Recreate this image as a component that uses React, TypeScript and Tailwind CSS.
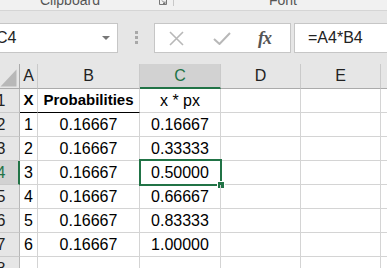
import React from "react";

const colW = ["w-[18px]", "w-[102px]", "w-[81px]", "w-[80px]", "w-[80px]", "w-[80px]"];
const letters = ["A", "B", "C", "D", "E", "F"];

const data: [string, string, string][] = [
  ["1", "0.16667", "0.16667"],
  ["2", "0.16667", "0.33333"],
  ["3", "0.16667", "0.50000"],
  ["4", "0.16667", "0.66667"],
  ["5", "0.16667", "0.83333"],
  ["6", "0.16667", "1.00000"],
];

function RowHeader({ n, active }: { n: number; active?: boolean }) {
  return (
    <div
      className={
        "w-[20px] shrink-0 h-full overflow-hidden flex items-center border-b border-[#cacaca] " +
        (active
          ? "bg-[#d2d2d2] border-r-2 border-r-[#217346] text-[#217346]"
          : "bg-[#e6e6e6] border-r border-r-[#b8b8b8] text-[#222]")
      }
    >
      <div className="w-[38px] -ml-[18px] shrink-0 text-center text-[16px]">{n}</div>
    </div>
  );
}

export default function App() {
  return (
    <div className="w-[387px] h-[268px] overflow-hidden bg-white font-['Liberation_Sans',sans-serif] text-black">
      {/* ribbon strip */}
      <div className="h-[11px] bg-[#f1f1f1] border-b border-[#d5d5d5] flex overflow-hidden">
        <div className="w-[173px] shrink-0 relative">
          <div className="pl-[40px] -mt-[7px] text-[14px] leading-[15px] text-[#555]">Clipboard</div>
          <svg className="absolute left-[159px] top-0" width="8" height="5" viewBox="0 0 8 5">
            <path d="M0.5 0 V4.5 H7.5 V0" fill="none" stroke="#777" strokeWidth="1" />
            <path d="M3 0.5 L6 3.5 M6 1.5 V3.5 H4" fill="none" stroke="#777" strokeWidth="1" />
          </svg>
        </div>
        <div className="w-px h-[6px] bg-[#c8c8c8] shrink-0" />
        <div className="flex-1 pl-[95px] -mt-[7px] text-[14px] leading-[15px] text-[#555]">Font</div>
      </div>

      {/* formula bar */}
      <div className="h-[53px] bg-[#e6e6e6] flex items-start pt-[12px]">
        <div className="-ml-[13px] w-[131px] h-[30px] shrink-0 bg-white border border-[#c6c6c6] flex items-center pl-[8px] pr-[7px]">
          <span className="text-[16px] text-[#222]">C4</span>
          <svg className="ml-auto" width="8" height="4" viewBox="0 0 8 4">
            <path d="M0 0 H8 L4 4 Z" fill="#777" />
          </svg>
        </div>
        <div className="ml-[17px] mt-[8px] flex flex-col gap-[2px] shrink-0">
          <div className="w-[3px] h-[3px] bg-[#a8a8a8]" />
          <div className="w-[3px] h-[3px] bg-[#a8a8a8]" />
          <div className="w-[3px] h-[3px] bg-[#a8a8a8]" />
        </div>
        <div className="ml-[16px] w-[137px] h-[30px] shrink-0 bg-white border border-[#c6c6c6] flex items-center pl-[14px]">
          <svg width="15" height="15" viewBox="0 0 15 15">
            <path d="M1 1 L14 14 M14 1 L1 14" stroke="#b8b8b8" strokeWidth="1.6" fill="none" />
          </svg>
          <svg className="ml-[29px]" width="18" height="13" viewBox="0 0 18 13">
            <path d="M1 7 L6.5 12 L17 1" stroke="#b8b8b8" strokeWidth="2" fill="none" />
          </svg>
          <span className="ml-[27px] font-['Liberation_Serif',serif] italic font-bold text-[18px] text-[#555] tracking-[-1px]">
            fx
          </span>
        </div>
        <div className="ml-[3px] flex-1 -mr-[20px] h-[30px] bg-white border border-[#c6c6c6] flex items-center pl-[13px]">
          <span className="text-[16px] text-[#222]">=A4*B4</span>
        </div>
      </div>

      {/* column headers */}
      <div className="h-[25px] flex">
        <div className="w-[20px] shrink-0 h-full bg-[#e6e6e6] border-r border-b border-[#ababab] relative">
          <svg className="absolute left-0 top-0" width="19" height="24" viewBox="0 0 19 24">
            <path d="M0.5 22.5 L16.5 5.5 L16.5 22.5 Z" fill="#b8b8b8" />
          </svg>
        </div>
        {letters.map((l, i) => (
          <div
            key={l}
            className={
              colW[i] +
              " shrink-0 h-full flex items-center justify-center text-[16px] border-r border-r-[#cacaca] " +
              (l === "C"
                ? "bg-[#d2d2d2] border-b-2 border-b-[#217346] text-[#217346]"
                : "bg-[#e6e6e6] border-b border-b-[#ababab] text-[#222]")
            }
          >
            {l}
          </div>
        ))}
      </div>

      {/* row 1 */}
      <div className="h-[24px] flex">
        <RowHeader n={1} />
        <div className="w-[18px] shrink-0 h-full flex items-center justify-center text-[15px] font-bold border-r border-r-[#d4d4d4] border-b border-b-black">
          X
        </div>
        <div className="w-[102px] shrink-0 h-full flex items-center justify-center text-[15px] font-bold border-r border-r-[#d4d4d4] border-b border-b-black">
          Probabilities
        </div>
        <div className="w-[81px] shrink-0 h-full flex items-center justify-center text-[16px] border-r border-b border-[#d4d4d4]">
          x * px
        </div>
        <div className="w-[80px] shrink-0 h-full border-r border-b border-[#d4d4d4]" />
        <div className="w-[80px] shrink-0 h-full border-r border-b border-[#d4d4d4]" />
        <div className="w-[80px] shrink-0 h-full border-r border-b border-[#d4d4d4]" />
      </div>

      {data.map((r, idx) => {
        const rowNum = idx + 2;
        const active = rowNum === 4;
        return (
          <div key={rowNum} className="h-[24px] flex">
            <RowHeader n={rowNum} active={active} />
            <div className="w-[18px] shrink-0 h-full flex items-center justify-center text-[16px] border-r border-b border-[#d4d4d4]">
              {r[0]}
            </div>
            <div className="w-[102px] shrink-0 h-full flex items-center justify-center text-[16px] border-r border-b border-[#d4d4d4]">
              {r[1]}
            </div>
            <div className="w-[81px] shrink-0 h-full flex items-center justify-center text-[16px] border-r border-b border-[#d4d4d4] relative">
              {r[2]}
              {active && (
                <>
                  <div className="absolute -left-px -top-[2px] w-[83px] h-[27px] border-2 border-[#217346]" />
                  <div className="absolute left-[77px] top-[20px] w-[8px] h-[8px] bg-[#217346] border border-white" />
                </>
              )}
            </div>
            <div className="w-[80px] shrink-0 h-full border-r border-b border-[#d4d4d4]" />
            <div className="w-[80px] shrink-0 h-full border-r border-b border-[#d4d4d4]" />
            <div className="w-[80px] shrink-0 h-full border-r border-b border-[#d4d4d4]" />
          </div>
        );
      })}

      {/* row 8 */}
      <div className="h-[24px] flex">
        <RowHeader n={8} />
        {colW.map((w, i) => (
          <div key={i} className={w + " shrink-0 h-full border-r border-b border-[#d4d4d4]"} />
        ))}
      </div>
    </div>
  );
}
